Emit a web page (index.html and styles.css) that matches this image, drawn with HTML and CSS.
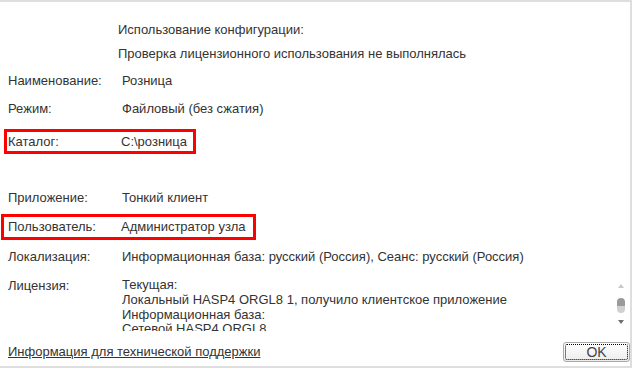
FILE: index.html
```html
<!DOCTYPE html>
<html lang="ru">
<head>
<meta charset="utf-8">
<link rel="stylesheet" href="styles.css">
</head>
<body>
<div class="dialog">
  <div class="content">
    <div class="head">
      <div class="head-line">Использование конфигурации:</div>
      <div class="head-line second">Проверка лицензионного использования не выполнялась</div>
    </div>
    <div class="row first"><span class="label">Наименование:</span><span class="value">Розница</span></div>
    <div class="row"><span class="label">Режим:</span><span class="value">Файловый (без сжатия)</span></div>
    <div class="row mark mark-catalog"><span class="label">Каталог:</span><span class="value">C:\розница</span></div>
    <div class="row after-gap"><span class="label">Приложение:</span><span class="value">Тонкий клиент</span></div>
    <div class="row mark mark-user"><span class="label">Пользователь:</span><span class="value">Администратор узла</span></div>
    <div class="row locale"><span class="label">Локализация:</span><span class="value">Информационная база: русский (Россия), Сеанс: русский (Россия)</span></div>
    <div class="license">
      <span class="label">Лицензия:</span>
      <div class="license-box">
        <div class="license-text">
          <div>Текущая:</div>
          <div>Локальный HASP4 ORGL8 1, получило клиентское приложение</div>
          <div>Информационная база:</div>
          <div>Сетевой HASP4 ORGL8</div>
        </div>
        <div class="scrollbar">
          <span class="arrow up"></span>
          <span class="thumb"></span>
          <span class="arrow down"></span>
        </div>
      </div>
    </div>
  </div>
  <div class="footer">
    <a class="support" href="#">Информация для технической поддержки</a>
    <button class="ok"><span class="ok-focus">OK</span></button>
  </div>
</div>
</body>
</html>
```
FILE: styles.css
```css
html, body {
  margin: 0;
  padding: 0;
  background: #fff;
}
body {
  font-family: "Liberation Sans", Arial, sans-serif;
  font-size: 13px;
  color: #333;
}
.dialog {
  box-sizing: border-box;
  width: 632px;
  height: 368px;
  border-top: 2px solid #dedede;
  border-right: 2px solid #dedede;
  border-bottom: 2px solid #dedede;
  display: flex;
  flex-direction: column;
  justify-content: space-between;
}
.content {
  display: flex;
  flex-direction: column;
}
.head {
  padding-left: 118px;
  padding-top: 20px;
}
.head-line {
  line-height: 16px;
}
.head-line.second {
  margin-top: 8px;
}
.row {
  display: grid;
  grid-template-columns: 114px auto;
  align-items: center;
  height: 28px;
  padding-left: 8px;
  line-height: 16px;
}
.row.first {
  margin-top: 5px;
}
.mark {
  box-sizing: border-box;
  border: 3px solid #f00;
  height: 25px;
  justify-self: start;
}
.mark-catalog {
  margin-top: 6px;
  margin-left: 4px;
  padding-left: 1px;
  width: 192px;
  grid-template-columns: 113px auto;
}
.after-gap {
  margin-top: 30px;
}
.mark-user {
  margin-top: 2px;
  margin-left: 1px;
  padding-left: 4px;
  width: 255px;
  height: 26px;
  grid-template-columns: 113px auto;
}
.row.locale {
  margin-top: 3px;
}
.license {
  display: grid;
  grid-template-columns: 114px auto;
  padding-left: 8px;
  margin-top: 7px;
  line-height: 15px;
}
.license-box {
  display: flex;
  justify-content: space-between;
  height: 53px;
  overflow: hidden;
  margin-right: 4px;
}
.license-text {
  line-height: 14.8px;
}
.scrollbar {
  width: 10px;
  display: flex;
  flex-direction: column;
  align-items: center;
  padding-top: 6px;
}
.arrow {
  width: 0;
  height: 0;
  border-left: 3px solid transparent;
  border-right: 3px solid transparent;
}
.arrow.up {
  border-bottom: 4px solid #c8c8c8;
}
.arrow.down {
  border-top: 4px solid #6e6e6e;
  margin-top: 7px;
}
.thumb {
  margin-top: 10px;
  width: 8px;
  height: 15px;
  border-radius: 4px;
  background: linear-gradient(#9a9a9a 0, #9a9a9a 55%, #d0d0d0 55%, #d0d0d0 100%);
}
.footer {
  display: flex;
  justify-content: space-between;
  align-items: center;
  padding-left: 8px;
  padding-bottom: 4px;
}
.support {
  color: #333;
  text-decoration: underline;
  line-height: 16px;
}
.ok {
  box-sizing: border-box;
  width: 67px;
  height: 20px;
  padding: 1px;
  border: 1px solid #a8a8a8;
  border-radius: 3px;
  background: linear-gradient(#ffffff, #ececec);
  font-family: "Liberation Sans", Arial, sans-serif;
  font-size: 14px;
  color: #444;
  display: flex;
}
.ok-focus {
  flex: 1;
  border: 1px dotted #000;
  border-radius: 2px;
  display: flex;
  align-items: center;
  justify-content: center;
  line-height: 14px;
}
```
